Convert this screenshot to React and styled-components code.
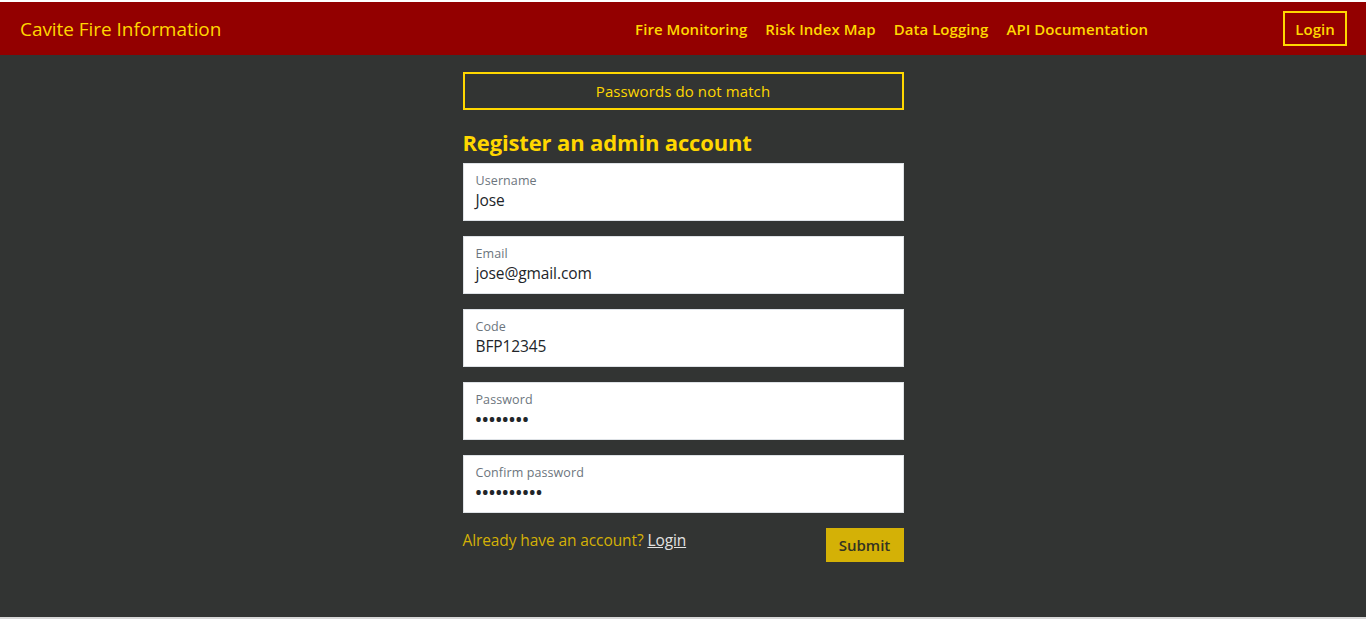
import React from 'react'
import styled, { createGlobalStyle } from 'styled-components';

const GlobalStyle = createGlobalStyle`
    html, body {
        margin: 0;
        padding: 0;
        background: #ffffff;
    }
    body {
        font-family: "Open Sans", "Noto Sans", sans-serif;
    }
    * {
        box-sizing: border-box;
    }
`

const fields = [
    { label: 'Username', value: 'Jose' },
    { label: 'Email', value: 'jose@gmail.com' },
    { label: 'Code', value: 'BFP12345' },
    { label: 'Password', value: '••••••••', secret: true },
    { label: 'Confirm password', value: '••••••••••', secret: true },
]

function App() {
    return (
        <Page>
            <GlobalStyle />
            <Navbar>
                <Brand>Cavite Fire Information</Brand>
                <NavLinks>
                    <NavLink>Fire Monitoring</NavLink>
                    <NavLink>Risk Index Map</NavLink>
                    <NavLink>Data Logging</NavLink>
                    <NavLink>API Documentation</NavLink>
                </NavLinks>
                <LoginButton>Login</LoginButton>
            </Navbar>
            <Main>
                <Form>
                    <Alert>Passwords do not match</Alert>
                    <Heading>Register an admin account</Heading>
                    <Fields>
                        {fields.map((f) => (
                            <Field key={f.label}>
                                <Label>{f.label}</Label>
                                <Value $secret={f.secret}>{f.value}</Value>
                            </Field>
                        ))}
                    </Fields>
                    <Actions>
                        <Hint>
                            Already have an account? <HintLink>Login</HintLink>
                        </Hint>
                        <Submit>Submit</Submit>
                    </Actions>
                </Form>
            </Main>
            <BottomStrip />
        </Page>
    )
}

export default App

const Page = styled.div`
    padding-top: 2px;
    display: flex;
    flex-direction: column;
    width: 100%;
`

const Navbar = styled.nav`
    display: flex;
    align-items: center;
    height: 53px;
    padding: 0 19px 0 20px;
    background-color: #930000;
`

const Brand = styled.div`
    color: #ffd700;
    font-size: 19px;
    letter-spacing: -0.05px;
`

const NavLinks = styled.div`
    display: flex;
    gap: 18px;
    margin-left: auto;
    margin-right: 135px;
`

const NavLink = styled.a`
    color: #ffd700;
    font-size: 15px;
    font-weight: 600;
    letter-spacing: 0.05px;
    cursor: pointer;
`

const LoginButton = styled.button`
    height: 35px;
    width: 64px;
    border: 2px solid #ffd700;
    background: transparent;
    color: #ffd700;
    font-family: inherit;
    font-size: 15px;
    font-weight: 600;
    padding: 0;
`

const Main = styled.main`
    display: flex;
    justify-content: center;
    min-height: 562px;
    background-color: #323433;
`

const Form = styled.div`
    width: 441px;
    padding-top: 17px;
    display: flex;
    flex-direction: column;
`

const Alert = styled.div`
    height: 38px;
    border: 2px solid #ffd700;
    color: #ffd700;
    font-size: 15px;
    display: flex;
    align-items: center;
    justify-content: center;
    letter-spacing: 0.1px;
`

const Heading = styled.h2`
    margin: 16px 0 5px;
    color: #ffd700;
    font-size: 22px;
    font-weight: 700;
    line-height: 32px;
    letter-spacing: -0.15px;
`

const Fields = styled.div`
    display: flex;
    flex-direction: column;
    gap: 15px;
`

const Field = styled.div`
    height: 58px;
    background: #ffffff;
    border: 1px solid #dee2e6;
    padding: 8px 12px 0;
    display: flex;
    flex-direction: column;
`

const Label = styled.span`
    color: #6c757d;
    font-size: 12.5px;
    line-height: 18px;
    letter-spacing: 0.1px;
`

const Value = styled.span`
    color: #212529;
    font-size: ${(p) => (p.$secret ? '16px' : '15.5px')};
    line-height: 21px;
    letter-spacing: ${(p) => (p.$secret ? '0.7px' : '-0.1px')};
    font-weight: ${(p) => (p.$secret ? 700 : 400)};
`

const Actions = styled.div`
    display: flex;
    justify-content: space-between;
    align-items: flex-start;
    margin-top: 15px;
`

const Hint = styled.div`
    color: #d4b106;
    font-size: 15.5px;
    letter-spacing: -0.1px;
    padding-top: 1px;
`

const HintLink = styled.a`
    color: #e2e2e2;
    text-decoration: underline;
    cursor: pointer;
`

const Submit = styled.button`
    width: 78px;
    height: 34px;
    border: none;
    background: #d4b106;
    color: #333322;
    font-family: inherit;
    font-size: 15px;
    font-weight: 600;
    padding: 0;
`

const BottomStrip = styled.div`
    height: 2px;
    background: #d8d8d8;
`
